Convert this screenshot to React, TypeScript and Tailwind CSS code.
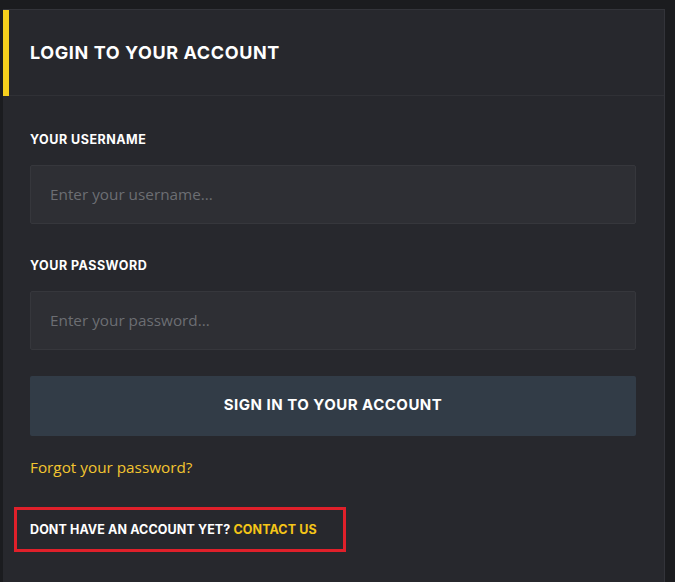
import React from 'react';

const heading = { fontFamily: 'Inter, "Liberation Sans", sans-serif' };
const body = { fontFamily: '"Open Sans", "Liberation Sans", sans-serif' };

export default function App() {
  return (
    <div className="min-h-[582px] w-full bg-[#1b1c1f] pt-[9px] pl-[3px] pr-[10px]">
      <div className="w-[662px] min-h-[573px] bg-[#27282d] border-r border-t border-[#33343a]">
        <div className="h-[86px] flex items-center border-b border-[#303136] relative">
          <div className="absolute left-0 top-0 h-[86px] w-[6px] bg-[#f5cf1d]" />
          <h1 style={heading} className="pl-[27px] text-[18px] font-bold text-white tracking-[0.6px]">
            LOGIN TO YOUR ACCOUNT
          </h1>
        </div>

        <div className="px-[27px] pt-[35px]">
          <label style={heading} className="block text-[12.5px] font-bold text-white tracking-[0.5px]">
            YOUR USERNAME
          </label>
          <input
            style={body}
            placeholder="Enter your username..."
            className="mt-[15px] w-[606px] h-[59px] bg-[#2e2f34] border border-[#36373c] rounded-[2px] px-[19px] text-[15.3px] text-white placeholder:text-[#6c6e73] outline-none"
          />

          <label style={heading} className="block mt-[33px] text-[12.5px] font-bold text-white tracking-[0.5px]">
            YOUR PASSWORD
          </label>
          <input
            style={body}
            type="password"
            placeholder="Enter your password..."
            className="mt-[15px] w-[606px] h-[59px] bg-[#2e2f34] border border-[#36373c] rounded-[2px] px-[19px] text-[15.3px] text-white placeholder:text-[#6c6e73] outline-none"
          />

          <button
            style={heading}
            className="mt-[26px] w-[606px] h-[60px] bg-[#323c47] rounded-[2px] text-[15px] font-bold text-white tracking-[0.5px]"
          >
            SIGN IN TO YOUR ACCOUNT
          </button>

          <a style={body} className="block mt-[20px] text-[15.3px] text-[#f3c530]">
            Forgot your password?
          </a>
        </div>

        <div className="pl-[11px] mt-[29px]">
          <div className="w-[332px] h-[45px] border-[3px] border-[#e0202a] flex items-center pl-[13px]">
            <p style={heading} className="text-[12.5px] font-bold text-white tracking-[0.1px] whitespace-nowrap">
              DONT HAVE AN ACCOUNT YET? <span className="text-[#f5c518]">CONTACT US</span>
            </p>
          </div>
        </div>
      </div>
    </div>
  );
}
